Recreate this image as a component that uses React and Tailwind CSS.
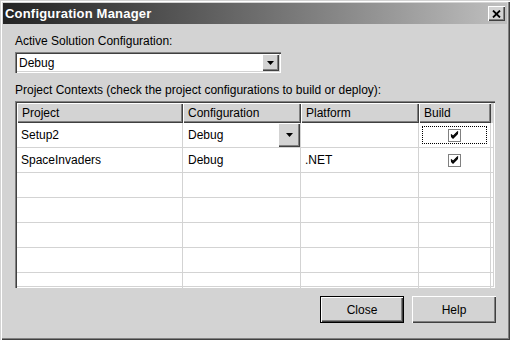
import React from 'react';

const raised = 'bg-[#d3d3d3] shadow-[inset_1px_1px_0_#ffffff,inset_-1px_-1px_0_#404040,inset_-2px_-2px_0_#808080]';
const sunken = 'shadow-[inset_1px_1px_0_#808080,inset_2px_2px_0_#404040,inset_-1px_-1px_0_#ffffff,inset_-2px_-2px_0_#d3d3d3]';

const Arrow = () => (
    <svg width="7" height="4" viewBox="0 0 7 4">
        <path d="M0 0h7L3.5 4z" fill="#000" />
    </svg>
);

const Check = () => (
    <svg width="9" height="9" viewBox="0 0 9 9">
        <path d="M1 4l2 2 5-5v2l-5 5-2-2z" fill="#000" />
        <path d="M1 3.5l2 2 5-5" stroke="#000" strokeWidth="1.4" fill="none" />
    </svg>
);

const CheckBox = () => (
    <div className="w-[13px] h-[13px] border border-[#808080] bg-white flex items-center justify-center">
        <Check />
    </div>
);

const rows = [
    { project: 'Setup2', config: 'Debug', platform: '', build: true, focus: true },
    { project: 'SpaceInvaders', config: 'Debug', platform: '.NET', build: true },
    {}, {}, {}, {}, {},
];

const Cell = ({ children, className = '' }) => (
    <div className={`h-[25px] border-r border-b border-[#d3d3d3] flex items-center ${className}`}>{children}</div>
);

const HeaderCell = ({ children }) => (
    <div className={`h-[20px] ${raised} flex items-center pl-[5px]`}>{children}</div>
);

export default function App() {
    return (
        <div
            className="w-[510px] h-[340px] bg-[#d3d3d3] overflow-hidden text-black text-[12px] leading-[14px] shadow-[inset_1px_1px_0_#d3d3d3,inset_2px_2px_0_#ffffff,inset_-1px_-1px_0_#404040,inset_-2px_-2px_0_#808080] p-[3px] flex flex-col"
            style={{ fontFamily: '"Liberation Sans", Arial, sans-serif' }}
        >
            <div className="h-[21px] bg-gradient-to-r from-[#242424] to-[#c0c0c0] flex items-center justify-between pl-[2px] pr-[2px] shrink-0">
                <span className="text-white font-bold text-[13px] tracking-[0.2px]">Configuration Manager</span>
                <div className={`w-[17px] h-[15px] ${raised} flex items-center justify-center`}>
                    <svg width="9" height="8" viewBox="0 0 9 8">
                        <path d="M1 0.5l7 7M8 0.5l-7 7" stroke="#000" strokeWidth="1.8" />
                    </svg>
                </div>
            </div>

            <div className="flex flex-col pl-[12px] pr-[10px] pt-[10px]">
                <div>Active Solution Configuration:</div>
                <div className={`mt-[4px] w-[266px] h-[21px] bg-white ${sunken} flex items-center justify-between pl-[4px] pr-[2px]`}>
                    <span>Debug</span>
                    <div className={`w-[17px] h-[17px] ${raised} flex items-center justify-center`}>
                        <Arrow />
                    </div>
                </div>

                <div className="mt-[10px]">Project Contexts (check the project configurations to build or deploy):</div>

                <div className={`mt-[4px] w-[480px] h-[187px] bg-white ${sunken} p-[2px] overflow-hidden`}>
                    <div className="grid grid-cols-[166px_118px_118px_72px_1fr]">
                        <HeaderCell>Project</HeaderCell>
                        <HeaderCell>Configuration</HeaderCell>
                        <HeaderCell>Platform</HeaderCell>
                        <HeaderCell>Build</HeaderCell>
                        <div className="h-[20px] bg-[#d3d3d3]" />
                        {rows.map((r, i) => (
                            <React.Fragment key={i}>
                                <Cell className="pl-[4px]">{r.project}</Cell>
                                <Cell className="pl-[5px] justify-between">
                                    <span>{r.config}</span>
                                    {r.focus && (
                                        <div className={`w-[22px] h-[24px] ${raised} flex items-center justify-center`}>
                                            <Arrow />
                                        </div>
                                    )}
                                </Cell>
                                <Cell className="pl-[4px]">{r.platform}</Cell>
                                <Cell className="justify-center relative">
                                    {r.focus && (
                                        <div className="absolute inset-x-[3px] inset-y-[3px] border border-dotted border-black" />
                                    )}
                                    {r.build && <CheckBox />}
                                </Cell>
                                <div className="h-[25px] border-b border-[#d3d3d3]" />
                            </React.Fragment>
                        ))}
                    </div>
                </div>

                <div className="mt-[8px] flex justify-end gap-[8px] pr-[1px]">
                    <div className="w-[84px] h-[27px] border border-black">
                        <div className={`w-full h-full ${raised} flex items-center justify-center`}>Close</div>
                    </div>
                    <div className={`w-[84px] h-[27px] ${raised} flex items-center justify-center`}>Help</div>
                </div>
            </div>
        </div>
    );
}
